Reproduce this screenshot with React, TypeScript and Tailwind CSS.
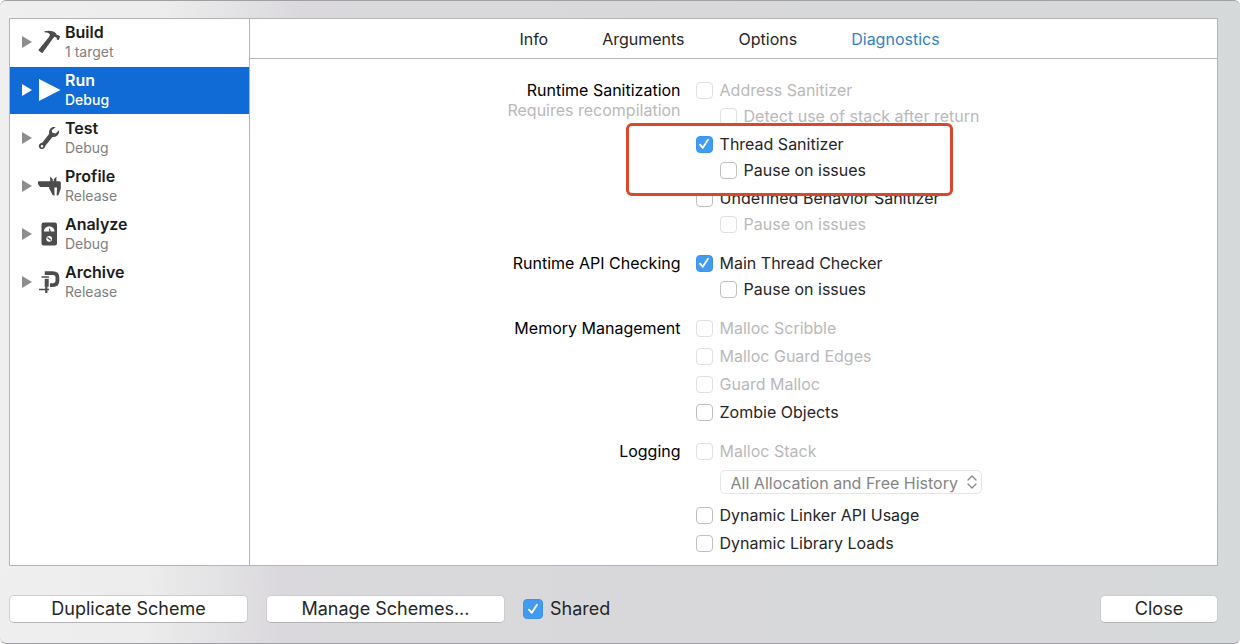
import type { ReactNode } from "react";

type Scheme = { name: string; detail: string; icon: ReactNode };

const HammerIcon = () => (
  <svg viewBox="0 0 24 24" className="size-6" fill="currentColor" aria-hidden="true">
    <path d="M7.500 1.300C11.500.2 15.800.6 18.700 3l1.200 2 1.600.2 1.700 1.300-1.700 3.700-1.600-.7-.2-1.700-2.200-1-1.600 1.700L5.300 23.200 1.200 20.200 12 7l1-2.500C12 2.900 9.900 2.300 7.500 2.200z" />
  </svg>
);

const PlayIcon = () => (
  <svg viewBox="0 0 24 24" className="size-6" fill="currentColor" aria-hidden="true">
    <path d="M2 1v22l21.500-11z" />
  </svg>
);

const WrenchIcon = () => (
  <svg viewBox="0 0 24 24" className="size-6" fill="currentColor" aria-hidden="true">
    <path
      fillRule="evenodd"
      d="M18.600 1.300c-3-.9-6.300 1.300-6.500 4.500-.1 1.200.1 1.900-.4 2.700L5.600 16.300c-.7.8-1.900.7-2.700 1.500-1.400 1.300-1.400 3.300-.1 4.500 1.300 1.200 3.400 1.100 4.500-.2.8-.9.700-1.900 1.300-2.700l6.400-7.800c.8-.9 1.800-.5 3-.8 2.900-.7 4.600-3.500 4-6.500l-3.400 3.200-3.300-.7-.6-2.600zM5 19a1.200 1.200 0 1 1 0 2.400A1.200 1.200 0 0 1 5 19z"
    />
  </svg>
);

const CaliperIcon = () => (
  <svg viewBox="0 0 24 24" className="size-6" fill="currentColor" aria-hidden="true">
    <path d="M1.500 7.300h11.700V2.500l2.600 2.700v2.100h1V5.200l2.600-2.700v4.800h3.400l1 1v6.200l-2.300 6.400-1.800.9.300-8.400h-2.600l.2 8.400-2-.9-3.500-6.700v-1.300H3L1 10V7.800z" />
  </svg>
);

const MeterIcon = () => (
  <svg viewBox="0 0 24 24" className="size-6" aria-hidden="true">
    <rect x="4.500" y=".5" width="15.500" height="23" rx="2.200" fill="currentColor" />
    <path d="M6.900 9.500a5.300 5.300 0 0 1 10.600 0h-3.600l-1.100-3-.9.300.5 2.700z" fill="#fff" />
    <circle cx="12.200" cy="16.800" r="2.900" fill="#fff" />
    <path d="M10.500 15.500l3.400 2.700" stroke="currentColor" strokeWidth="1.300" />
  </svg>
);

const ClampIcon = () => (
  <svg viewBox="0 0 24 24" className="size-6" aria-hidden="true" fill="none" stroke="currentColor">
    <path d="M7.800 3.200h8c3.200 0 4.600 1.600 4.600 4.300v3.300c0 2.800-1.800 4.300-4.600 4.300H13" strokeWidth="3.800" />
    <path d="M4.500 7h7.500" strokeWidth="1.500" />
    <path d="M9.700 8.800v8" strokeWidth="4" />
    <path d="M9.300 16.500v6.500" strokeWidth="2.200" />
    <path d="M2 19.500h10" strokeWidth="1.500" />
  </svg>
);

const schemes: Scheme[] = [
  { name: "Build", detail: "1 target", icon: <HammerIcon /> },
  { name: "Run", detail: "Debug", icon: <PlayIcon /> },
  { name: "Test", detail: "Debug", icon: <WrenchIcon /> },
  { name: "Profile", detail: "Release", icon: <CaliperIcon /> },
  { name: "Analyze", detail: "Debug", icon: <MeterIcon /> },
  { name: "Archive", detail: "Release", icon: <ClampIcon /> },
];

function SchemeRow({ scheme, selected }: { scheme: Scheme; selected: boolean }) {
  return (
    <li className="h-12 pb-px">
      <button
        type="button"
        className={
          selected
            ? "flex h-full w-full items-center bg-[#116bd6] pb-[2px] pl-3 text-left text-white"
            : "flex h-full w-full items-center pb-[2px] pl-3 text-left text-[#4c4c4c]"
        }
      >
        <svg viewBox="0 0 10 12" className={selected ? "h-3 w-[10px]" : "h-3 w-[10px] text-[#8e8e8e]"} fill="currentColor" aria-hidden="true">
          <path d="M0 0v12l10-6z" />
        </svg>
        <span className="ml-[5px]">{scheme.icon}</span>
        <span className="ml-1 flex flex-col pt-px">
          <span className={selected ? "text-base/5 font-semibold" : "text-base/5 font-semibold text-[#1c1c1c]"}>{scheme.name}</span>
          <span className={selected ? "text-sm/5 font-medium" : "text-sm/5 text-[#808080]"}>{scheme.detail}</span>
        </span>
      </button>
    </li>
  );
}

type CheckProps = { label: string; checked?: boolean; disabled?: boolean; sub?: boolean; large?: boolean };

function Check({ label, checked = false, disabled = false, sub = false, large = false }: CheckProps) {
  return (
    <label className={sub ? "ml-6 flex h-5 w-max items-center gap-[7px]" : "flex h-5 w-max items-center gap-[7px]"}>
      <span className="grid place-items-center">
        <input
          type="checkbox"
          defaultChecked={checked}
          disabled={disabled}
          className={
            (large ? "size-5 " : "size-[17px] ") +
            "peer col-start-1 row-start-1 appearance-none rounded-[4px] border border-[#c0c0c0] bg-white checked:border-[#3b93ec] checked:bg-[#429bf1] disabled:border-[#e0e0e0]"
          }
        />
        <svg
          viewBox="0 0 16 16"
          className="pointer-events-none invisible col-start-1 row-start-1 size-4 peer-checked:visible"
          fill="none"
          stroke="#fff"
          strokeWidth="1.800"
          strokeLinecap="round"
          strokeLinejoin="round"
          aria-hidden="true"
        >
          <path d="M4 8.600l2.800 3.200L12 3.800" />
        </svg>
      </span>
      <span className={large ? "text-lg" : disabled ? "text-[#b9b9b9]" : ""}>{label}</span>
    </label>
  );
}

function Section({ title, note, children }: { title: string; note?: string; children: ReactNode }) {
  return (
    <section className="grid grid-cols-[431fr_537fr]">
      <header className="text-right leading-5">
        <h2 className="text-black">{title}</h2>
        {note && <p className="text-[#b9b9b9]">{note}</p>}
      </header>
      <div className="flex flex-col gap-2 pl-[15px]">{children}</div>
    </section>
  );
}

function Group({ children }: { children: ReactNode }) {
  return <div className="flex flex-col gap-[6px]">{children}</div>;
}

const tabs = ["Info", "Arguments", "Options", "Diagnostics"];
const pushButton =
  "h-7 rounded-[5px] border border-[#cdcdcf] border-b-[#b5b5b7] bg-white text-lg leading-none text-[#262626]";

export default function App() {
  return (
    <div className="flex min-h-screen flex-col rounded-md border-y border-[#a0a0a4] bg-[linear-gradient(92deg,#efefef_0%,#ededed_13%,#dad8dc_24%,#d8d8da_60%,#d6d9d9_100%)] pr-[22px] pl-[9px] pt-[17px] font-['Inter','Liberation_Sans',sans-serif] text-base text-[#262626]">
      <main className="flex flex-1 border border-[#b4b4b4] bg-white">
        <nav aria-label="Scheme actions" className="w-60 shrink-0 border-r border-[#b4b4b4]">
          <ul>
            {schemes.map((s) => (
              <SchemeRow key={s.name} scheme={s} selected={s.name === "Run"} />
            ))}
          </ul>
        </nav>
        <div className="min-w-0 flex-1">
          <div role="tablist" className="flex h-10 items-center justify-center gap-[54px] border-b border-[#b4b4b4] pr-2">
            {tabs.map((t) => (
              <button
                key={t}
                type="button"
                role="tab"
                aria-selected={t === "Diagnostics"}
                className={t === "Diagnostics" ? "text-[#3480c8]" : ""}
              >
                {t}
              </button>
            ))}
          </div>
          <div className="flex flex-col gap-[19px] pt-[21px] pb-2">
            <Section title="Runtime Sanitization" note="Requires recompilation">
              <Group>
                <Check label="Address Sanitizer" disabled />
                <Check label="Detect use of stack after return" disabled sub />
              </Group>
              <div className="relative z-10 w-max">
                <div className="absolute -top-[11px] -left-[70px] h-[73px] w-[327px] rounded-md border-3 border-[#d9482b] bg-white" />
                <div className="relative">
                  <Group>
                    <Check label="Thread Sanitizer" checked />
                    <Check label="Pause on issues" sub />
                  </Group>
                </div>
              </div>
              <Group>
                <Check label="Undefined Behavior Sanitizer" />
                <Check label="Pause on issues" disabled sub />
              </Group>
            </Section>
            <Section title="Runtime API Checking">
              <Group>
                <Check label="Main Thread Checker" checked />
                <Check label="Pause on issues" sub />
              </Group>
            </Section>
            <Section title="Memory Management">
              <Check label="Malloc Scribble" disabled />
              <Check label="Malloc Guard Edges" disabled />
              <Check label="Guard Malloc" disabled />
              <Check label="Zombie Objects" />
            </Section>
            <Section title="Logging">
              <Group>
                <Check label="Malloc Stack" disabled />
                <div className="ml-6 flex h-[30px] w-max items-center">
                  <div className="grid items-center">
                    <select
                      disabled
                      aria-label="Malloc stack history"
                      className="col-start-1 row-start-1 h-6 w-[262px] appearance-none rounded-[5px] border border-[#e6e6e6] bg-white pl-[10px] text-[#858585] opacity-100"
                    >
                      <option>All Allocation and Free History</option>
                    </select>
                    <svg
                      viewBox="0 0 10 14"
                      className="pointer-events-none col-start-1 row-start-1 mr-[5px] h-[14px] w-[10px] justify-self-end"
                      fill="none"
                      stroke="#8c8c8c"
                      strokeWidth="1.400"
                      strokeLinecap="round"
                      strokeLinejoin="round"
                      aria-hidden="true"
                    >
                      <path d="M1 5l4-4 4 4M1 9l4 4 4-4" />
                    </svg>
                  </div>
                </div>
              </Group>
              <Check label="Dynamic Linker API Usage" />
              <Check label="Dynamic Library Loads" />
            </Section>
          </div>
        </div>
      </main>
      <footer className="flex h-[77px] items-center pt-3 pb-1">
        <button type="button" className={pushButton + " w-[239px]"}>
          Duplicate Scheme
        </button>
        <button type="button" className={pushButton + " ml-[18px] w-[239px]"}>
          Manage Schemes...
        </button>
        <div className="ml-[18px]">
          <Check label="Shared" checked large />
        </div>
        <button type="button" className={pushButton + " ml-auto w-[118px]"}>
          Close
        </button>
      </footer>
    </div>
  );
}
